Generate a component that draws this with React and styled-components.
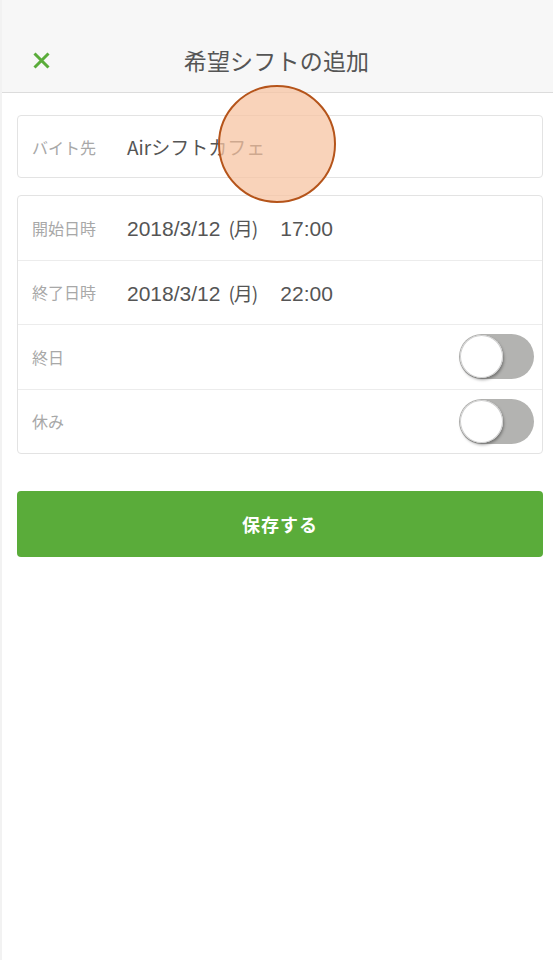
import React from "react";
import styled, { createGlobalStyle } from "styled-components";

const GlobalStyle = createGlobalStyle`
  html, body {
    margin: 0;
    padding: 0;
    background: #ffffff;
  }
  body {
    font-family: "Noto Sans CJK JP", "Noto Sans", sans-serif;
  }
`;

const Screen = styled.div`
  position: relative;
  width: 553px;
  height: 960px;
  background: #ffffff;
  border-left: 2px solid #f2f2f2;
  box-sizing: border-box;
  overflow: hidden;
`;

const Header = styled.header`
  height: 93px;
  background: #f7f7f7;
  border-bottom: 1px solid #dcdcdc;
  box-sizing: border-box;
  display: grid;
  grid-template-columns: 1fr auto 1fr;
  align-items: center;
  padding: 28px 0 0 29px;
`;

const CloseButton = styled.button`
  border: none;
  background: none;
  padding: 0;
  width: 20px;
  height: 20px;
  display: flex;
  align-items: center;
  justify-content: center;
`;

const Title = styled.h1`
  margin: 0 0 0 -31px;
  font-size: 23px;
  font-weight: 400;
  color: #555555;
  letter-spacing: 0.2px;
`;

const Content = styled.main`
  padding: 22px 10px 0 15px;
  display: flex;
  flex-direction: column;
`;

const Card = styled.section`
  border: 1px solid #e3e3e3;
  border-radius: 4px;
  background: #fff;
  margin-bottom: ${(p) => p.$gap || 0}px;
`;

const Row = styled.div`
  height: ${(p) => p.$h || 63.5}px;
  display: flex;
  align-items: center;
  padding: 0 8px 0 14px;
  border-top: ${(p) => (p.$first ? "none" : "1px solid #ececec")};
`;

const Label = styled.span`
  width: 95px;
  font-size: 16px;
  color: #a8a8a8;
`;

const Value = styled.span`
  flex: 1;
  font-size: 19px;
  color: #555555;
`;

const DateValue = styled.span`
  flex: 1;
  display: flex;
  align-items: baseline;
  font-family: "Liberation Sans", "Noto Sans CJK JP", sans-serif;
  font-size: 21px;
  color: #555555;
`;

const Weekday = styled.span`
  margin-left: 8px;
  font-family: "Noto Sans CJK JP", sans-serif;
  font-size: 19px;
  letter-spacing: -1px;
`;

const Time = styled.span`
  margin-left: 23px;
`;

const Toggle = styled.div`
  width: 75px;
  height: 45px;
  border-radius: 23px;
  background: #b3b3b1;
  position: relative;
  box-sizing: border-box;
  &::after {
    content: "";
    position: absolute;
    left: 1px;
    top: 1px;
    width: 43px;
    height: 43px;
    border-radius: 50%;
    background: #fff;
    box-shadow: 1px 2px 3px rgba(0, 0, 0, 0.35), inset 0 0 0 1px #cfcfcf;
  }
`;

const SaveButton = styled.button`
  height: 66px;
  border: none;
  border-radius: 4px;
  background: #5aac3a;
  color: #fff;
  font-family: inherit;
  font-size: 18px;
  font-weight: 700;
  letter-spacing: 1px;
`;

const Touch = styled.div`
  position: absolute;
  left: 216px;
  top: 85px;
  width: 118px;
  height: 118px;
  border-radius: 50%;
  background: rgba(247, 196, 163, 0.75);
  border: 2px solid #b5541a;
  box-sizing: border-box;
  pointer-events: none;
`;

const rows = [
  { label: "開始日時", date: "2018/3/12", day: "(月)", time: "17:00" },
  { label: "終了日時", date: "2018/3/12", day: "(月)", time: "22:00" },
  { label: "終日", toggle: true },
  { label: "休み", toggle: true },
];

const App = () => {
  return (
    <Screen>
      <GlobalStyle />
      <Header>
        <CloseButton aria-label="閉じる">
          <svg width="17" height="17" viewBox="0 0 17 17">
            <path d="M1.5 1.5 L15.5 15.5 M15.5 1.5 L1.5 15.5" stroke="#5aac3a" strokeWidth="3" />
          </svg>
        </CloseButton>
        <Title>希望シフトの追加</Title>
        <span />
      </Header>
      <Content>
        <Card $gap={17}>
          <Row $first $h={61}>
            <Label>バイト先</Label>
            <Value>Airシフトカフェ</Value>
          </Row>
        </Card>
        <Card $gap={37}>
          {rows.map((r, i) => (
            <Row key={r.label} $first={i === 0}>
              <Label>{r.label}</Label>
              {r.date ? (
                <DateValue>
                  {r.date}
                  <Weekday>{r.day}</Weekday>
                  <Time>{r.time}</Time>
                </DateValue>
              ) : (
                <Value />
              )}
              {r.toggle && <Toggle />}
            </Row>
          ))}
        </Card>
        <SaveButton>保存する</SaveButton>
      </Content>
      <Touch />
    </Screen>
  );
};

export default App;
